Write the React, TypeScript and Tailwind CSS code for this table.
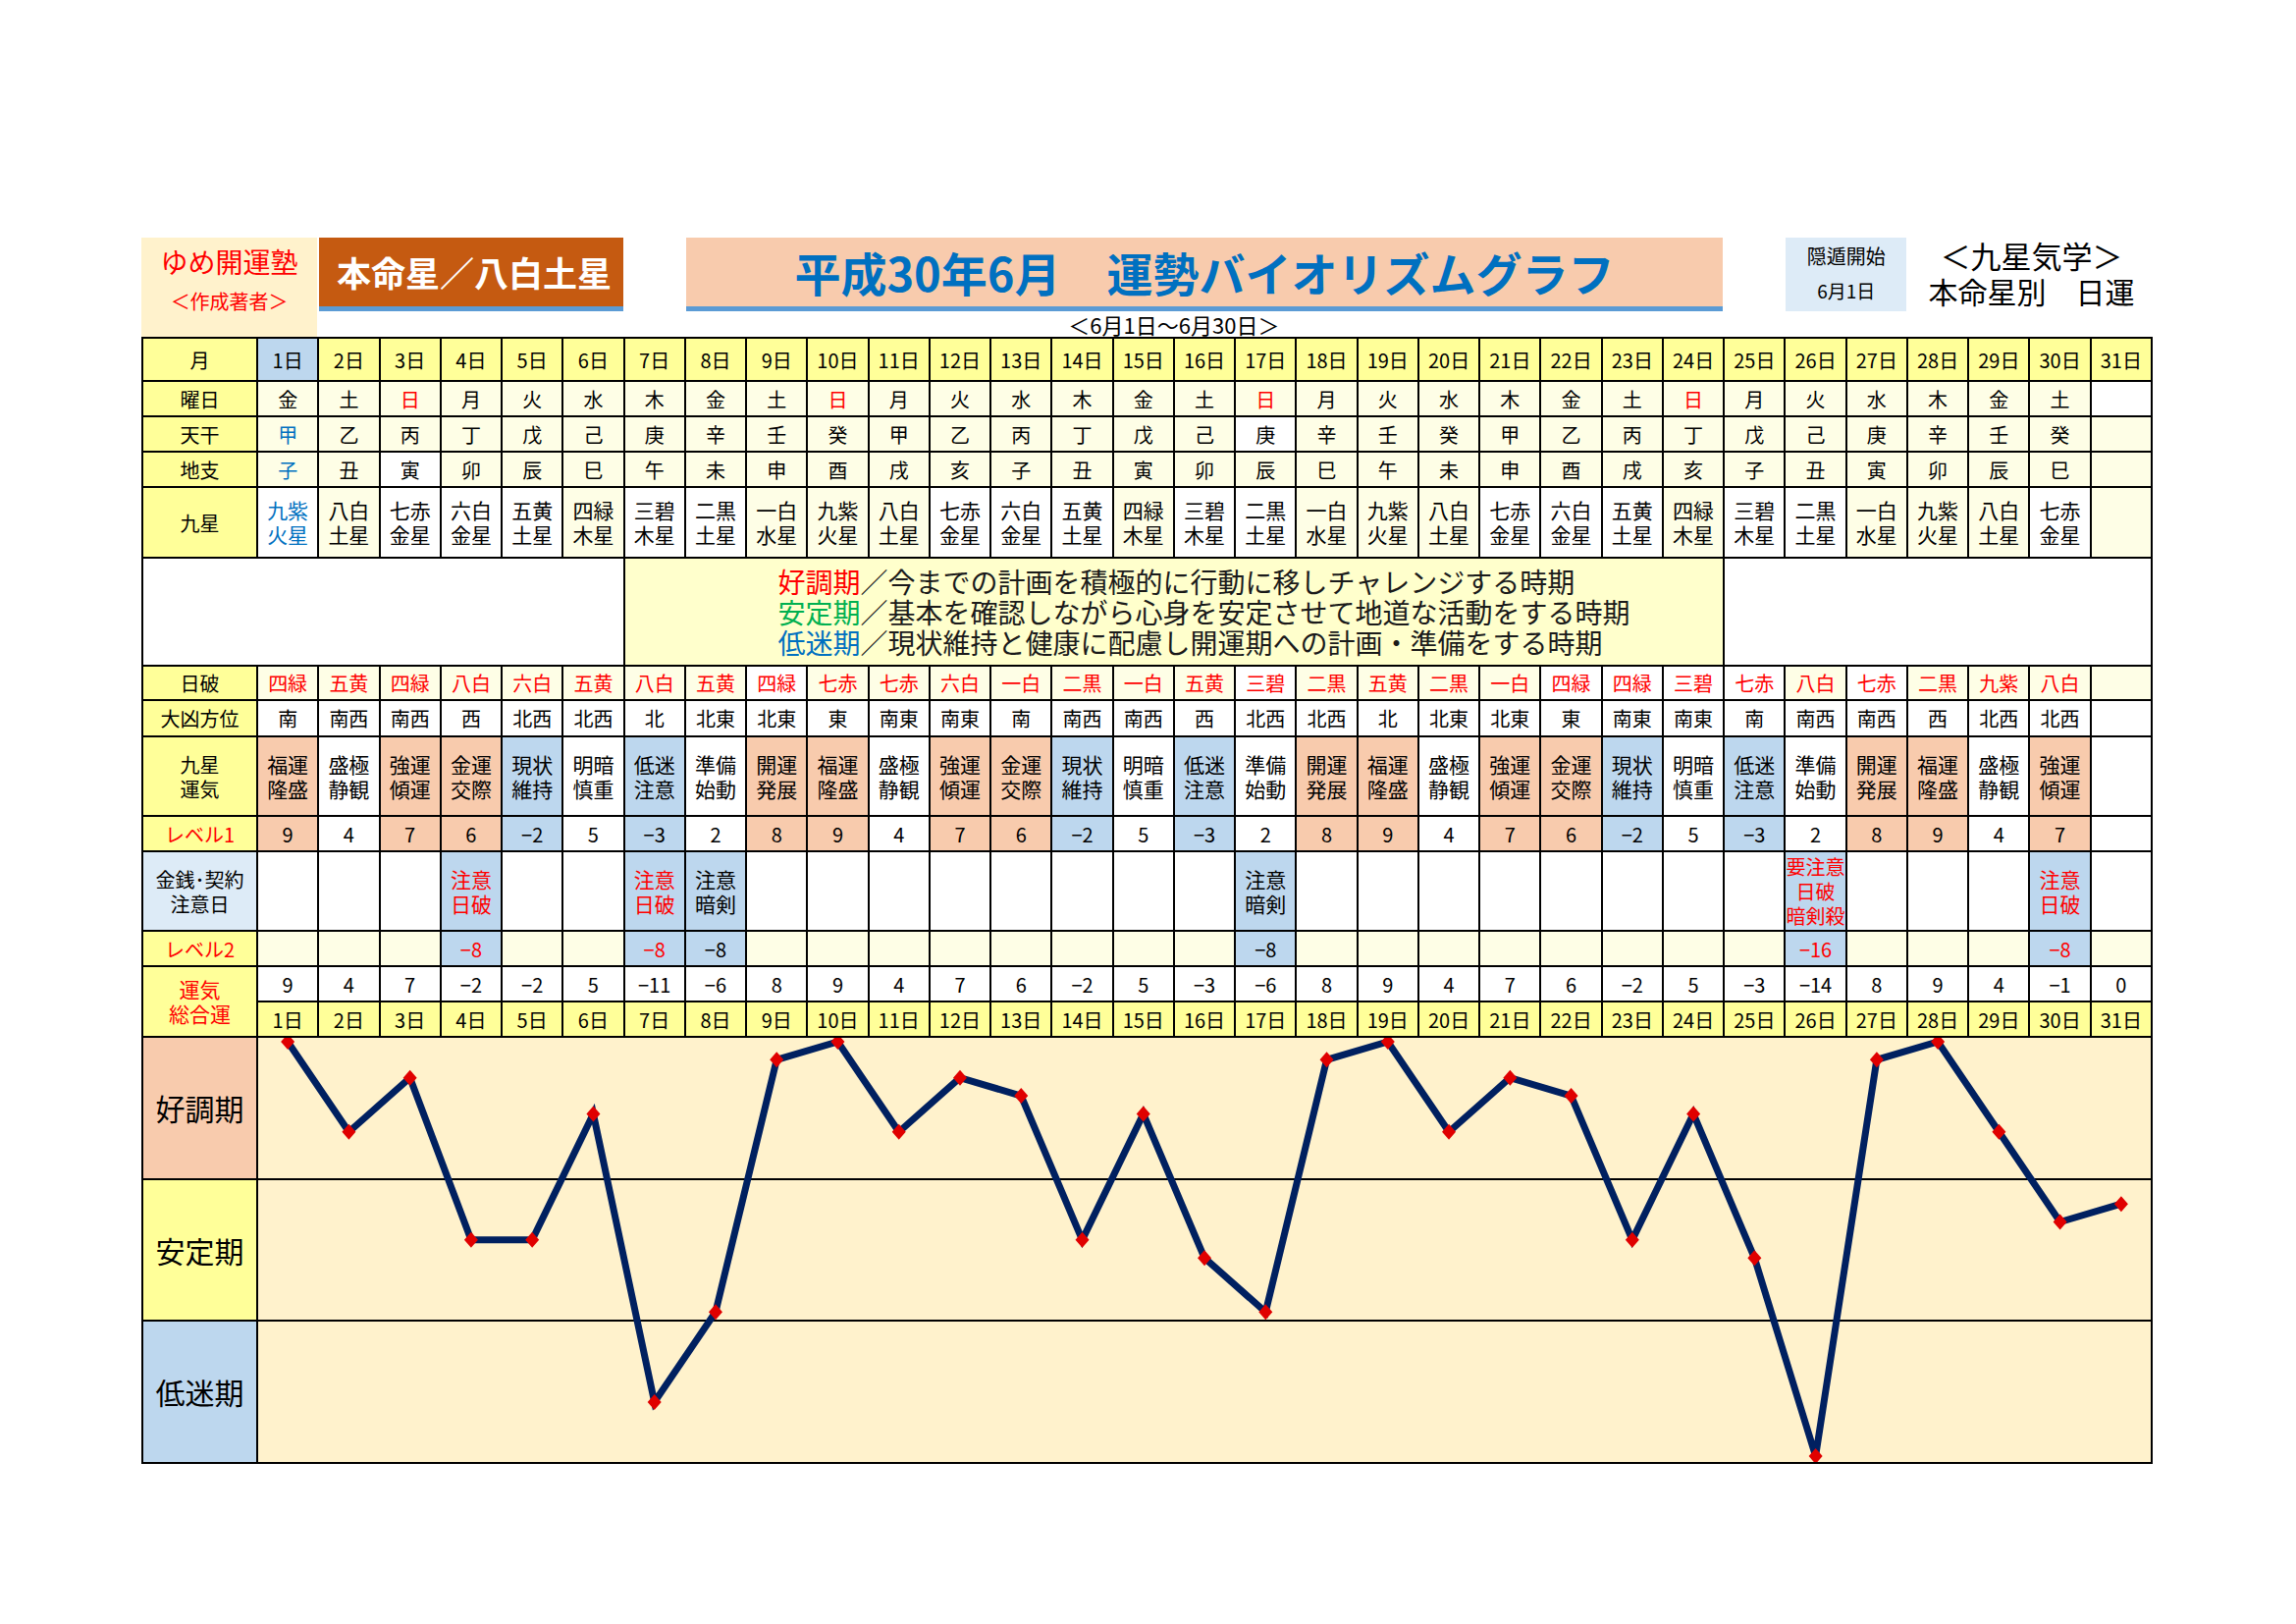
import clsx from "clsx";

const FONT = { fontFamily: '"Noto Sans CJK JP", "Noto Sans", sans-serif' };

const DAYS = Array.from({ length: 31 }, (_, i) => i + 1);
const YOUBI = "金土日月火水木金土日月火水木金土日月火水木金土日月火水木金土".split("");
const KAN = "甲乙丙丁戊己庚辛壬癸".split("");
const SHI = "子丑寅卯辰巳午未申酉戌亥".split("");
const STARS = [
  "九紫火星",
  "八白土星",
  "七赤金星",
  "六白金星",
  "五黄土星",
  "四緑木星",
  "三碧木星",
  "二黒土星",
  "一白水星",
];
const NIPPA = [
  "四緑", "五黄", "四緑", "八白", "六白", "五黄", "八白", "五黄", "四緑", "七赤",
  "七赤", "六白", "一白", "二黒", "一白", "五黄", "三碧", "二黒", "五黄", "二黒",
  "一白", "四緑", "四緑", "三碧", "七赤", "八白", "七赤", "二黒", "九紫", "八白",
];
const HOUI = [
  "南", "南西", "南西", "西", "北西", "北西", "北", "北東", "北東", "東",
  "南東", "南東", "南", "南西", "南西", "西", "北西", "北西", "北", "北東",
  "北東", "東", "南東", "南東", "南", "南西", "南西", "西", "北西", "北西",
];

type Tone = "peach" | "blue" | "white";
const UNKI: { text: string; lv: number; tone: Tone }[] = [
  { text: "福運隆盛", lv: 9, tone: "peach" },
  { text: "盛極静観", lv: 4, tone: "white" },
  { text: "強運傾運", lv: 7, tone: "peach" },
  { text: "金運交際", lv: 6, tone: "peach" },
  { text: "現状維持", lv: -2, tone: "blue" },
  { text: "明暗慎重", lv: 5, tone: "white" },
  { text: "低迷注意", lv: -3, tone: "blue" },
  { text: "準備始動", lv: 2, tone: "white" },
  { text: "開運発展", lv: 8, tone: "peach" },
];

// 金銭・契約注意日 (day -> note)
const CAUTION: Record<number, { lines: string[]; red: boolean; lv: number; small?: boolean }> = {
  4: { lines: ["注意", "日破"], red: true, lv: -8 },
  7: { lines: ["注意", "日破"], red: true, lv: -8 },
  8: { lines: ["注意", "暗剣"], red: false, lv: -8 },
  17: { lines: ["注意", "暗剣"], red: false, lv: -8 },
  26: { lines: ["要注意", "日破", "暗剣殺"], red: true, lv: -16, small: true },
  30: { lines: ["注意", "日破"], red: true, lv: -8 },
};

const CREAM_STARS = ["八白土星", "四緑木星", "一白水星", "九紫火星"];
const NIPPA_WHITE = [9, 17, 22, 23, 24, 25, 27];

const toneBg: Record<Tone, string> = {
  peach: "bg-[#f8cbad]",
  blue: "bg-[#bdd7ee]",
  white: "bg-white",
};

function num(v: number) {
  return v < 0 ? `−${Math.abs(v)}` : `${v}`;
}

const TOTALS = DAYS.map((d) => {
  if (d === 31) return 0;
  const u = UNKI[(d - 1) % 9];
  return u.lv + (CAUTION[d]?.lv ?? 0);
});

function Cell({ className, children }: { className?: string; children?: React.ReactNode }) {
  return (
    <div className={clsx("flex items-center justify-center text-center text-[20px] leading-[25px]", className)}>
      {children}
    </div>
  );
}

function Label({ className, children }: { className?: string; children?: React.ReactNode }) {
  return <Cell className={clsx("bg-[#ffff99]", className)}>{children}</Cell>;
}

function Chart() {
  const cw = 62.26;
  const pts = TOTALS.map((v, i) => [i * cw + 30.13, 4 + (9 - v) * 18.35]);
  return (
    <div className="relative col-span-31 flex flex-col bg-[#fff2cc]">
      <div className="flex-1 border-b-2 border-black" />
      <div className="flex-1 border-b-2 border-black" />
      <div className="flex-1" />
      <svg
        className="absolute inset-0 h-full w-full"
        viewBox="0 0 1928 432"
        preserveAspectRatio="none"
      >
        <polyline
          points={pts.map((p) => p.join(",")).join(" ")}
          fill="none"
          stroke="#002060"
          strokeWidth={7}
          strokeLinejoin="miter"
        />
        {pts.map(([x, y], i) => (
          <polygon
            key={i}
            points={`${x},${y - 8} ${x + 7},${y} ${x},${y + 8} ${x - 7},${y}`}
            fill="#e00000"
          />
        ))}
      </svg>
    </div>
  );
}

export default function App() {
  return (
    <div className="min-h-[1654px] w-[2339px] bg-white text-black" style={FONT}>
      <div className="ml-[144px] w-[2049px] pt-[242px]">
        {/* Header */}
        <div className="grid h-[101px] grid-cols-[115px_repeat(31,minmax(0,1fr))] grid-rows-[70px_5px_26px] gap-x-[2px] px-[2px]">
          <div className="col-span-2 row-span-3 -ml-[2px] flex flex-col items-center bg-[#fff2cc] pt-[5px] text-[#ff0000]">
            <div className="text-[28px] leading-[38px]">ゆめ開運塾</div>
            <div className="mt-[9px] text-[20px] leading-[26px]">＜作成著者＞</div>
          </div>
          <div className="col-span-5 col-start-3 row-span-2 row-start-1 flex items-center justify-center border-b-[5px] border-[#5b9bd5] bg-[#c55a11] pl-[6px] text-[35px] font-bold text-white">
            本命星／八白土星
          </div>
          <div className="col-span-17 col-start-9 row-span-2 row-start-1 flex items-center justify-center border-b-[5px] border-[#5b9bd5] bg-[#f8cbad] text-[47px] font-bold text-[#0070c0]">
            平成30年6月　運勢バイオリズムグラフ
          </div>
          <div className="col-span-16 col-start-9 row-start-3 flex items-center justify-center text-[22px] leading-[26px]">
            ＜6月1日～6月30日＞
          </div>
          <div className="col-span-2 col-start-27 row-span-2 row-start-1 flex flex-col items-center bg-[#ddebf7] pt-[4px]">
            <div className="text-[20px] leading-[30px]">隠遁開始</div>
            <div className="mt-[7px] text-[19px] leading-[26px]">6月1日</div>
          </div>
          <div className="col-span-4 col-start-29 row-span-2 row-start-1 flex flex-col items-center pl-[4px]">
            <div className="text-[31px] leading-[36px]">＜九星気学＞</div>
            <div className="whitespace-pre text-[30px] leading-[36px]">本命星別　日運</div>
          </div>
        </div>

        {/* Table */}
        <div className="grid grid-cols-[115px_repeat(31,minmax(0,1fr))] grid-rows-[42px_34px_34px_34px_70px_108px_33px_35px_79px_34px_79px_34px_34px_34px_432px] gap-[2px] bg-black p-[2px]">
          {/* 月 */}
          <Label>月</Label>
          {DAYS.map((d) => (
            <Cell key={`m${d}`} className={d === 1 ? "bg-[#bdd7ee]" : "bg-[#ffff99]"}>
              {d}日
            </Cell>
          ))}

          {/* 曜日 */}
          <Label>曜日</Label>
          {DAYS.map((d) => (
            <Cell
              key={`y${d}`}
              className={clsx(d === 31 ? "bg-white" : "bg-[#fefee6]", YOUBI[d - 1] === "日" && "text-[#ff0000]")}
            >
              {YOUBI[d - 1] ?? ""}
            </Cell>
          ))}

          {/* 天干 */}
          <Label>天干</Label>
          {DAYS.map((d) => (
            <Cell
              key={`k${d}`}
              className={clsx(d === 17 ? "bg-white" : "bg-[#fefee6]", d === 1 && "text-[#0070c0]")}
            >
              {d <= 30 ? KAN[(d - 1) % 10] : ""}
            </Cell>
          ))}

          {/* 地支 */}
          <Label>地支</Label>
          {DAYS.map((d) => (
            <Cell
              key={`s${d}`}
              className={clsx(d === 3 ? "bg-white" : "bg-[#fefee6]", d === 1 && "text-[#0070c0]")}
            >
              {d <= 30 ? SHI[(d - 1) % 12] : ""}
            </Cell>
          ))}

          {/* 九星 */}
          <Label>九星</Label>
          {DAYS.map((d) => {
            const star = d <= 30 ? STARS[(d - 1) % 9] : "";
            const cream = d === 31 || (d > 1 && CREAM_STARS.includes(star));
            return (
              <Cell
                key={`q${d}`}
                className={clsx("flex-col text-[21px]", cream ? "bg-[#fefee6]" : "bg-white", d === 1 && "text-[#0070c0]")}
              >
                <span>{star.slice(0, 2)}</span>
                <span>{star.slice(2)}</span>
              </Cell>
            );
          })}

          {/* 説明 */}
          <div className="col-span-7 bg-white" />
          <div className="col-span-18 flex flex-col justify-center bg-[#ffffcc] pl-[156px] text-[28px] leading-[31px] text-[#1a1a1a]">
            <div>
              <span className="text-[#ff0000]">好調期</span>／今までの計画を積極的に行動に移しチャレンジする時期
            </div>
            <div>
              <span className="text-[#00b050]">安定期</span>／基本を確認しながら心身を安定させて地道な活動をする時期
            </div>
            <div>
              <span className="text-[#0070c0]">低迷期</span>／現状維持と健康に配慮し開運期への計画・準備をする時期
            </div>
          </div>
          <div className="col-span-7 bg-white" />

          {/* 日破 */}
          <Label>日破</Label>
          {DAYS.map((d) => (
            <Cell
              key={`n${d}`}
              className={clsx(NIPPA_WHITE.includes(d) ? "bg-white" : "bg-[#fefee6]", "text-[#ff0000]")}
            >
              {NIPPA[d - 1] ?? ""}
            </Cell>
          ))}

          {/* 大凶方位 */}
          <Label>大凶方位</Label>
          {DAYS.map((d) => (
            <Cell key={`h${d}`} className="bg-white">
              {HOUI[d - 1] ?? ""}
            </Cell>
          ))}

          {/* 九星運気 */}
          <Label className="flex-col">
            <span>九星</span>
            <span>運気</span>
          </Label>
          {DAYS.map((d) => {
            const u = d <= 30 ? UNKI[(d - 1) % 9] : null;
            return (
              <Cell key={`u${d}`} className={clsx("flex-col text-[21px]", u ? toneBg[u.tone] : "bg-white")}>
                <span>{u ? u.text.slice(0, 2) : ""}</span>
                <span>{u ? u.text.slice(2) : ""}</span>
              </Cell>
            );
          })}

          {/* レベル1 */}
          <Label className="text-[#ff0000]">レベル1</Label>
          {DAYS.map((d) => {
            const u = d <= 30 ? UNKI[(d - 1) % 9] : null;
            return (
              <Cell key={`l${d}`} className={u ? toneBg[u.tone] : "bg-white"}>
                {u ? num(u.lv) : ""}
              </Cell>
            );
          })}

          {/* 金銭・契約注意日 */}
          <Cell className="flex-col bg-[#ddebf7]">
            <span>金銭･契約</span>
            <span>注意日</span>
          </Cell>
          {DAYS.map((d) => {
            const c = CAUTION[d];
            return (
              <Cell
                key={`c${d}`}
                className={clsx(
                  "flex-col",
                  c ? "bg-[#bdd7ee]" : "bg-white",
                  c?.red && "text-[#ff0000]",
                  c?.small ? "text-[16px] leading-[21px]" : "text-[21px]",
                )}
              >
                {c?.lines.map((l) => (
                  <span key={l}>{l}</span>
                ))}
              </Cell>
            );
          })}

          {/* レベル2 */}
          <Label className="text-[#ff0000]">レベル2</Label>
          {DAYS.map((d) => {
            const c = CAUTION[d];
            return (
              <Cell
                key={`v${d}`}
                className={clsx(c ? "bg-[#bdd7ee]" : "bg-[#fefee6]", c?.red && "text-[#ff0000]")}
              >
                {c ? num(c.lv) : ""}
              </Cell>
            );
          })}

          {/* 運気総合運 */}
          <Label className="row-span-2 flex-col text-[21px] text-[#ff0000]">
            <span>運気</span>
            <span>総合運</span>
          </Label>
          {DAYS.map((d, i) => (
            <Cell key={`t${d}`} className="bg-white">
              {num(TOTALS[i])}
            </Cell>
          ))}
          {DAYS.map((d) => (
            <Cell key={`d${d}`} className="bg-[#ffff99]">
              {d}日
            </Cell>
          ))}

          {/* グラフ */}
          <div className="flex flex-col gap-[2px] bg-black">
            <Cell className="flex-1 bg-[#f8cbad] text-[30px]">好調期</Cell>
            <Cell className="flex-1 bg-[#ffff99] text-[30px]">安定期</Cell>
            <Cell className="flex-1 bg-[#bdd7ee] text-[30px]">低迷期</Cell>
          </div>
          <Chart />
        </div>
      </div>
    </div>
  );
}
